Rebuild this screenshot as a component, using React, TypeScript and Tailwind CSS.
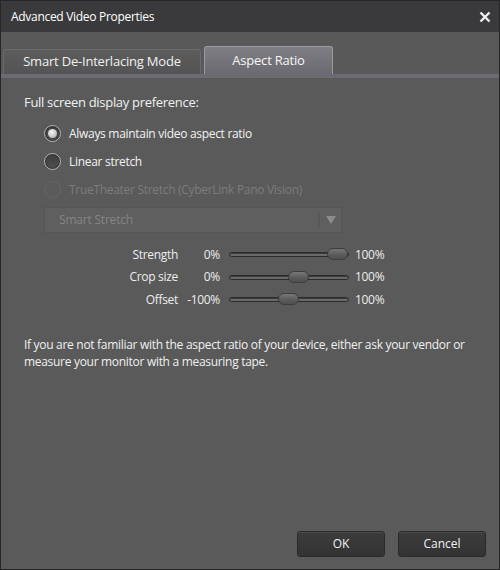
const font = "font-['Segoe_UI','Open_Sans',sans-serif]";

const Radio = ({ checked, disabled, label }: { checked?: boolean; disabled?: boolean; label: string }) => (
  <div className="flex h-[28px] items-center gap-[8px]">
    <div
      className={
        disabled
          ? "flex h-[17px] w-[17px] items-center justify-center rounded-full border border-[#666]"
          : "flex h-[17px] w-[17px] items-center justify-center rounded-full border border-[#b4b4b4] bg-[linear-gradient(#3e3e3e,#4e4e4e)] shadow-[inset_0_0_0_1px_#333]"
      }
    >
      {checked && <div className="h-[9px] w-[9px] rounded-full bg-[radial-gradient(circle_at_40%_35%,#f4f4f4,#a8a8a8)]" />}
    </div>
    <span
      className={
        disabled
          ? "text-[12px] tracking-[-0.3px] text-[#7c7c7c]"
          : "text-[12px] tracking-[-0.3px] text-[#f2f2f2]"
      }
    >
      {label}
    </span>
  </div>
);

const Slider = ({ label, min, pos }: { label: string; min: string; pos: number }) => (
  <div className="flex h-[22.5px] items-center text-[12px] tracking-[-0.3px] text-[#ededed]">
    <span className="w-[177px] text-right">{label}</span>
    <span className="w-[42px] text-right">{min}</span>
    <div className="relative ml-[9px] h-[5px] w-[120px] rounded-full border border-[#2b2b2b] bg-[#6a6a6a] shadow-[inset_0_1px_0_#3c3c3c]">
      <div
        className="absolute top-[-5px] h-[12px] w-[21px] rounded-full border border-[#3d3d3d] bg-[linear-gradient(#777,#5c5c5c_55%,#4f4f4f)]"
        style={{ left: pos }}
      />
    </div>
    <span className="ml-[6px]">100%</span>
  </div>
);

export default function App() {
  return (
    <div className={`flex h-[570px] w-[500px] flex-col border border-[#262626] bg-[#5a5a5a] ${font}`}>
      <div className="flex h-[31px] items-center justify-between bg-[#3a3a3c] pl-[10px] pr-[7px] text-[12px] tracking-[-0.3px] text-white">
        <span>Advanced Video Properties</span>
        <svg width="12" height="12" viewBox="0 0 12 12" className="mr-[1px]">
          <path d="M1.5 1.5 L10.5 10.5 M10.5 1.5 L1.5 10.5" stroke="#f2f2f2" strokeWidth="2.4" />
        </svg>
      </div>
      <div className="flex h-[42px] items-end gap-[3px] bg-[#595959] px-[2px]">
        <div className="flex h-[25px] w-[198px] items-center justify-center rounded-t-[3px] border-t border-x border-[#6a6a6a] bg-[linear-gradient(#5c5c5c,#545456)] text-[13px] tracking-[-0.2px] text-[#f0f0f0]">
          Smart De-Interlacing Mode
        </div>
        <div className="flex h-[28px] w-[129px] items-center justify-center rounded-t-[3px] border-t border-x border-[#9a9aa0] bg-[linear-gradient(#7e7e84,#6a6a70)] text-[13px] tracking-[-0.2px] text-[#f6f6f6]">
          Aspect Ratio
        </div>
      </div>
      <div className="h-[4px] bg-[#6b6b73]" />
      <div className="flex flex-1 flex-col px-[23px] pt-[15px]">
        <div className="text-[13px] tracking-[-0.3px] text-[#f0f0f0]">Full screen display preference:</div>
        <div className="mt-[7px] flex flex-col pl-[20px]">
          <Radio checked label="Always maintain video aspect ratio" />
          <Radio label="Linear stretch" />
          <Radio disabled label="TrueTheater Stretch (CyberLink Pano Vision)" />
          <div className="mt-[3px] flex h-[26px] w-[298px] items-center border border-[#555] bg-[#5f5f5f]">
            <span className="flex-1 pl-[14px] text-[12px] tracking-[-0.2px] text-[#858585]">Smart Stretch</span>
            <div className="h-[16px] w-[2px] bg-[#575757]" />
            <div className="flex w-[21px] justify-center">
              <svg width="10" height="8" viewBox="0 0 10 8">
                <path d="M0 0 H10 L5 8 Z" fill="#8c8c8c" />
              </svg>
            </div>
          </div>
        </div>
        <div className="mt-[11px] ml-[-23px] flex flex-col">
          <Slider label="Strength" min="0%" pos={97} />
          <Slider label="Crop size" min="0%" pos={58} />
          <Slider label="Offset" min="-100%" pos={48} />
        </div>
        <p className="mt-[25px] text-[12px] leading-[17px] tracking-[-0.3px] text-[#f0f0f0]">
          If you are not familiar with the aspect ratio of your device, either ask your vendor or measure your monitor with a measuring tape.
        </p>
        <div className="mt-auto mb-[12px] mr-[-10px] flex justify-end gap-[13px]">
          <button className="h-[26px] w-[88px] rounded-[3px] border border-[#2a2a2a] bg-[linear-gradient(#3c3c3c,#333)] text-[12px] text-[#f2f2f2] shadow-[inset_0_1px_0_#4a4a4a]">
            OK
          </button>
          <button className="h-[26px] w-[88px] rounded-[3px] border border-[#2a2a2a] bg-[linear-gradient(#3c3c3c,#333)] text-[12px] text-[#f2f2f2] shadow-[inset_0_1px_0_#4a4a4a]">
            Cancel
          </button>
        </div>
      </div>
    </div>
  );
}
